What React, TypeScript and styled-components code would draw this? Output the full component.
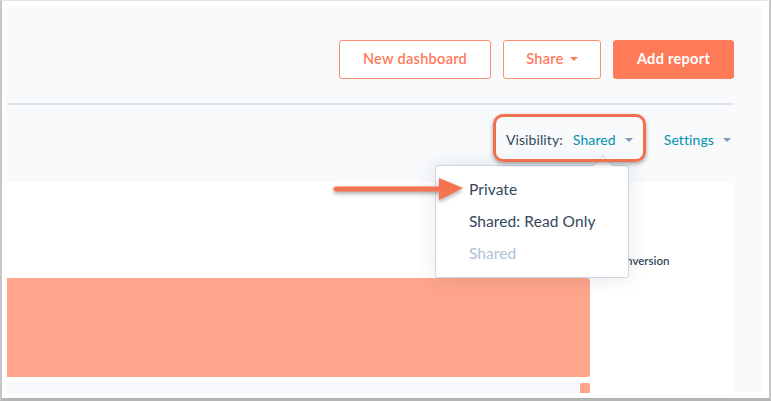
import React from "react";
import styled, { createGlobalStyle } from "styled-components";

const GlobalStyle = createGlobalStyle`
  html, body {
    margin: 0;
    padding: 0;
    background: #ffffff;
  }
  body {
    font-family: Lato, "Open Sans", "Noto Sans", sans-serif;
    color: #33475b;
  }
`;

const Window = styled.div`
  width: 771px;
  height: 401px;
  box-sizing: border-box;
  background: #ffffff;
  border-top: 1px solid #e4e4e4;
  border-left: 2px solid #c6c6c6;
  border-right: 2px solid #c6c6c6;
  border-bottom: 3px solid #b5b5b5;
  padding: 5px 6px 5px 5px;
  overflow: hidden;
`;

const Inner = styled.div`
  position: relative;
  height: 100%;
  background: #f8fafc;
  display: flex;
  flex-direction: column;
  overflow: hidden;
`;

const Header = styled.div`
  display: flex;
  justify-content: flex-end;
  gap: 12px;
  padding: 34px 29px 0 0;
  height: 63px;
`;

const Button = styled.button<{ $primary?: boolean; $width: number }>`
  width: ${(p) => p.$width}px;
  height: 39px;
  box-sizing: border-box;
  border-radius: 3px;
  border: 1px solid ${(p) => (p.$primary ? "#ff7a59" : "#ff8f73")};
  background: ${(p) => (p.$primary ? "#ff7a59" : "#ffffff")};
  color: ${(p) => (p.$primary ? "#ffffff" : "#ff7a59")};
  font-family: Lato, "Open Sans", sans-serif;
  font-size: 14.5px;
  letter-spacing: 0.3px;
  font-weight: ${(p) => (p.$primary ? 700 : 600)};
  display: flex;
  align-items: center;
  justify-content: center;
  gap: 6px;
  padding: 0 0 2px;
`;

const Caret = styled.span<{ $color: string }>`
  display: inline-block;
  width: 0;
  height: 0;
  border-left: 4px solid transparent;
  border-right: 4px solid transparent;
  border-top: 4px solid ${(p) => p.$color};
  margin-top: 1px;
`;

const Divider = styled.div`
  height: 2px;
  background: #dfe3eb;
  margin-right: 29px;
`;

const Toolbar = styled.div`
  height: 68px;
  margin-bottom: 9px;
  display: flex;
  align-items: center;
  justify-content: flex-end;
  gap: 31px;
  padding-right: 32px;
`;

const Control = styled.div`
  position: relative;
  height: 20px;
  display: flex;
  align-items: center;
  font-size: 14px;
  letter-spacing: 0.1px;
  white-space: nowrap;
`;

const Label = styled.span`
  color: #33475b;
  margin-right: 10px;
`;

const Link = styled.span`
  color: #0091ae;
  margin-right: 9px;
`;

const HighlightRing = styled.div`
  position: absolute;
  left: -13px;
  right: -13px;
  top: -15px;
  bottom: -13px;
  border: 3px solid #f2704f;
  border-radius: 10px;
  box-shadow: 0 2px 4px rgba(0, 0, 0, 0.35);
  z-index: 3;
  pointer-events: none;
`;

const Dropdown = styled.div`
  position: absolute;
  left: -71px;
  top: 36px;
  width: 194px;
  box-sizing: border-box;
  background: #ffffff;
  border: 1px solid #cbd6e2;
  border-radius: 3px;
  box-shadow: 0 1px 20px rgba(45, 62, 80, 0.12);
  padding: 7px 0 8px;
  z-index: 2;

  &::before {
    content: "";
    position: absolute;
    top: -8px;
    left: 160px;
    width: 13px;
    height: 13px;
    background: #ffffff;
    border-left: 1px solid #cbd6e2;
    border-top: 1px solid #cbd6e2;
    transform: rotate(45deg);
  }
`;

const MenuItem = styled.div<{ $disabled?: boolean }>`
  height: 32px;
  display: flex;
  align-items: center;
  padding-left: 33px;
  font-size: 15.5px;
  letter-spacing: 0.1px;
  color: ${(p) => (p.$disabled ? "#b0c1d4" : "#33475b")};
  position: relative;
`;

const Card = styled.div`
  flex: 1;
  margin-right: 29px;
  background: #ffffff;
  border-top-right-radius: 5px;
  display: grid;
  grid-template-columns: 583px 1fr;
`;

const Chart = styled.div`
  padding-top: 96px;
  display: flex;
  flex-direction: column;
  gap: 5px;
`;

const Bar = styled.div`
  height: 99px;
  background: #ffa58b;
  border-radius: 0 3px 3px 0;
`;

const BandRow = styled.div`
  height: 11px;
  background: #f6f8fb;
  display: flex;
  justify-content: flex-end;
`;

const SmallBar = styled.div`
  width: 10px;
  height: 11px;
  margin-top: 1px;
  background: #ffa58b;
  border-radius: 2px 2px 0 0;
`;

const Legend = styled.div`
  padding: 72px 0 0 22px;
  font-size: 11.5px;
  font-weight: 600;
  color: #33475b;
`;

const Pointer = styled.svg`
  position: absolute;
  left: 324px;
  top: 167px;
  z-index: 4;
  filter: drop-shadow(0 2px 2px rgba(0, 0, 0, 0.35));
`;

export default function App() {
  return (
    <>
      <GlobalStyle />
      <Window>
        <Inner>
          <Header>
            <Button $width={152}>New dashboard</Button>
            <Button $width={98}>
              Share <Caret $color="#ff7a59" />
            </Button>
            <Button $primary $width={121}>
              Add report
            </Button>
          </Header>
          <Divider />
          <Toolbar>
            <Control>
              <Label>Visibility:</Label>
              <Link>Shared</Link>
              <Caret $color="#7c98b6" />
              <HighlightRing />
              <Dropdown>
                <MenuItem>Private</MenuItem>
                <MenuItem>Shared: Read Only</MenuItem>
                <MenuItem $disabled>Shared</MenuItem>
              </Dropdown>
            </Control>
            <Control>
              <Link>Settings</Link>
              <Caret $color="#7c98b6" />
            </Control>
          </Toolbar>
          <Card>
            <Chart>
              <Bar />
              <BandRow>
                <SmallBar />
              </BandRow>
            </Chart>
            <Legend>Conversion</Legend>
          </Card>
          <Pointer width="140" height="36" viewBox="0 0 140 36">
            <line x1="5" y1="16" x2="112" y2="16" stroke="#f5744f" strokeWidth="5" strokeLinecap="round" />
            <polygon points="108,5 132,15 108,27" fill="#f5744f" />
          </Pointer>
        </Inner>
      </Window>
    </>
  );
}
